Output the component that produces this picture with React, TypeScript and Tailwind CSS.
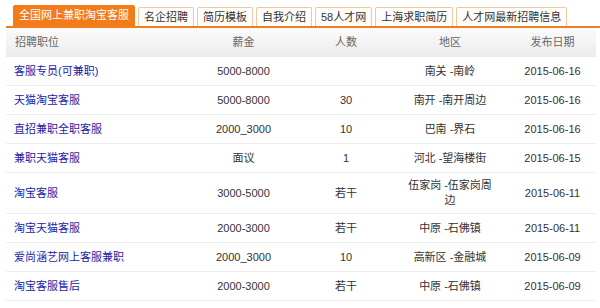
import React from 'react';

const tabs = ['名企招聘', '简历模板', '自我介绍', '58人才网', '上海求职简历', '人才网最新招聘信息'];

const jobs = [
  { title: '客服专员(可兼职)', pay: '5000-8000', num: '', area: '南关 -南岭', date: '2015-06-16' },
  { title: '天猫淘宝客服', pay: '5000-8000', num: '30', area: '南开 -南开周边', date: '2015-06-16' },
  { title: '直招兼职全职客服', pay: '2000_3000', num: '10', area: '巴南 -界石', date: '2015-06-16' },
  { title: '兼职天猫客服', pay: '面议', num: '1', area: '河北 -望海楼街', date: '2015-06-15' },
  { title: '淘宝客服', pay: '3000-5000', num: '若干', area: '伍家岗 -伍家岗周边', date: '2015-06-11' },
  { title: '淘宝天猫客服', pay: '2000-3000', num: '若干', area: '中原 -石佛镇', date: '2015-06-11' },
  { title: '爱尚涵艺网上客服兼职', pay: '2000_3000', num: '10', area: '高新区 -金融城', date: '2015-06-09' },
  { title: '淘宝客服售后', pay: '2000-3000', num: '若干', area: '中原 -石佛镇', date: '2015-06-09' },
  { title: '网店客服', pay: '2000-3000', num: '若干', area: '上街 -上街周边', date: '2015-06-09' },
];

const cols = 'grid grid-cols-[188px_99px_106px_102px_1fr] items-center';

export default function App() {
  return (
    <div
      className="w-[600px] h-[308px] overflow-hidden bg-white text-[11px] text-[#333]"
      style={{ fontFamily: '"Liberation Sans", "Noto Sans CJK SC", sans-serif' }}
    >
      <div className="ml-[6px]">
        {/* Tabs */}
        <div className="flex items-end gap-[3px] pl-[7px] h-[26px]">
          <div className="h-[21px] px-[6px] flex items-center bg-[#f27b1c] text-white rounded-t-[2px]">
            全国网上兼职淘宝客服
          </div>
          {tabs.map((t) => (
            <div
              key={t}
              className="h-[19px] px-[5px] flex items-center border border-b-0 border-[#efc9a4] bg-[#fffdfa] text-[#333] rounded-t-[2px]"
            >
              {t}
            </div>
          ))}
        </div>
        <div className="h-[2px] w-[594px] bg-[#f0801f]" />

        {/* Table */}
        <div className="w-[590px]">
          <div className={`${cols} h-[29px] bg-gradient-to-b from-[#fbfbfb] to-[#ececec] border-b border-[#eaeaea] text-[#666]`}>
            <div className="pl-[9px]">招聘职位</div>
            <div className="text-center">薪金</div>
            <div className="text-center">人数</div>
            <div className="text-center">地区</div>
            <div className="text-center pl-[8px]">发布日期</div>
          </div>

          {jobs.map((j, i) => (
            <div key={i} className={`${cols} min-h-[29px] border-b border-[#eeeeee] leading-[15px]`}>
              <div className="pl-[8px] py-[5px] text-[#2323a5]">{j.title}</div>
              <div className="text-center py-[5px]">{j.pay}</div>
              <div className="text-center py-[5px]">{j.num}</div>
              <div className="text-center py-[5px] px-[5px]">{j.area}</div>
              <div className="text-center py-[5px] pl-[8px]">{j.date}</div>
            </div>
          ))}
        </div>
      </div>
    </div>
  );
}
